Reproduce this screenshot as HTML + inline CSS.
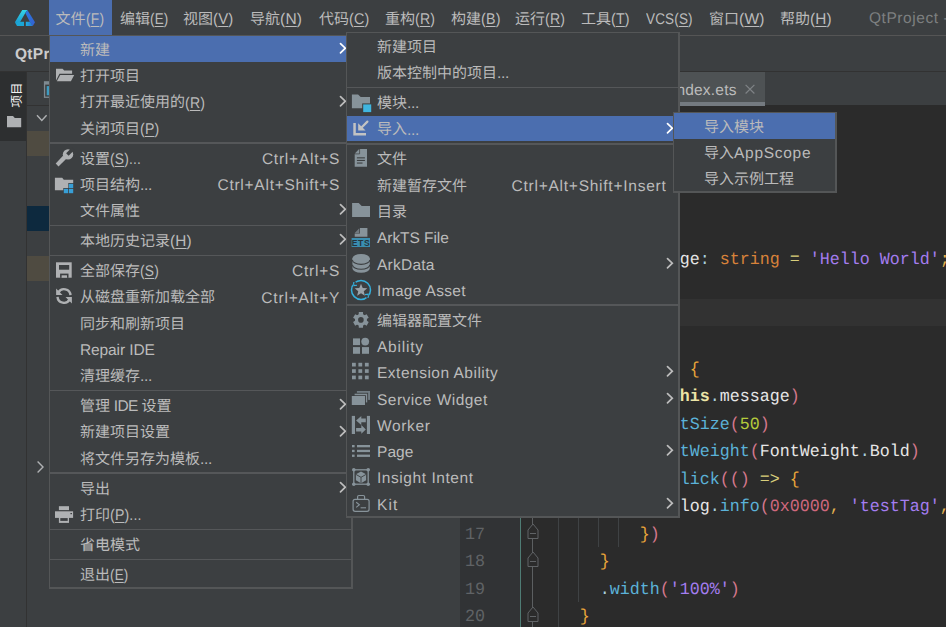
<!DOCTYPE html>
<html lang="zh-CN"><head><meta charset="utf-8"><title>DevEco Studio</title>
<style>
html,body{margin:0;padding:0;background:#3c3f41;width:946px;height:627px;overflow:hidden;}
#root{position:absolute;left:0;top:0;width:946px;height:627px;overflow:hidden;background:#3c3f41;}
body{width:946px;height:627px;position:relative;overflow:hidden;font-family:"Liberation Sans",sans-serif;font-size:15px;color:#bbbbbb;}
.t{text-rendering:geometricPrecision;position:absolute;white-space:nowrap;font-family:"Liberation Sans",sans-serif;font-size:15px;}
.z{display:inline-block;position:relative;top:1.6px;white-space:nowrap;letter-spacing:0;font-family:"Liberation Sans","Noto Sans CJK SC",sans-serif;font-size:15px;line-height:1;}
.l{font-size:15.5px;letter-spacing:0.3px;position:relative;top:1.8px;}
.c{text-rendering:geometricPrecision;position:absolute;white-space:pre;font-family:"Liberation Mono",monospace;font-size:16.67px;transform:scaleY(1.03);transform-origin:0 50%;}
u{text-decoration:underline;text-underline-offset:2px;text-decoration-thickness:1px;}
svg{display:block}
</style></head><body><div id="root">
<div style="position:absolute;left:0px;top:0px;width:946px;height:35px;background:#3c3f41;"></div>
<div style="position:absolute;left:0px;top:35px;width:946px;height:1px;background:#555555;"></div>
<div style="position:absolute;left:0px;top:36px;width:946px;height:35px;background:#3c3f41;"></div>
<div style="position:absolute;left:0px;top:71px;width:946px;height:1px;background:#323232;"></div>
<div style="position:absolute;left:0px;top:72px;width:26px;height:555px;background:#3c3f41;"></div>
<div style="position:absolute;left:0px;top:72px;width:26px;height:68.6px;background:#2d2f30;"></div>
<div style="position:absolute;left:26px;top:72px;width:1px;height:555px;background:#323232;"></div>
<div style="position:absolute;left:27px;top:72px;width:433px;height:555px;background:#3c3f41;"></div>
<div style="position:absolute;left:27px;top:105px;width:433px;height:1px;background:#323232;"></div>
<div style="position:absolute;left:27px;top:131px;width:433px;height:25px;background:#4f4b41;"></div>
<div style="position:absolute;left:27px;top:205.5px;width:433px;height:25px;background:#0d293e;"></div>
<div style="position:absolute;left:27px;top:256px;width:433px;height:25px;background:#4f4b41;"></div>
<div style="position:absolute;left:460px;top:72px;width:486px;height:33px;background:#3c3f41;"></div>
<div style="position:absolute;left:460px;top:105px;width:486px;height:522px;background:#2b2b2b;"></div>
<div style="position:absolute;left:640px;top:72px;width:125px;height:34px;background:#4e5254;"></div>
<div style="position:absolute;left:640px;top:101.8px;width:125px;height:4.2px;background:#747a80;"></div>
<div style="position:absolute;left:460px;top:106px;width:60px;height:521px;background:#313335;"></div>
<div style="position:absolute;left:520px;top:106px;width:1px;height:521px;background:#4f7c74;"></div>
<div style="position:absolute;left:521px;top:299px;width:425px;height:26.5px;background:#323232;"></div>
<div style="position:absolute;left:49px;top:0px;width:63px;height:35px;background:#4b6eaf;"></div>
<div class="t" style="left:55.5px;top:0px;height:35px;line-height:35px;color:#bbbbbb;"><span class="z" style="width:30px">文件</span><span class="l" style="display:inline-block;transform:scaleX(0.89);transform-origin:0 50%;letter-spacing:0.2px">(<u>F</u>)</span></div>
<div class="t" style="left:120px;top:0px;height:35px;line-height:35px;color:#bbbbbb;"><span class="z" style="width:30px">编辑</span><span class="l" style="display:inline-block;transform:scaleX(0.865);transform-origin:0 50%;letter-spacing:0.2px">(<u>E</u>)</span></div>
<div class="t" style="left:183px;top:0px;height:35px;line-height:35px;color:#bbbbbb;"><span class="z" style="width:30px">视图</span><span class="l" style="display:inline-block;transform:scaleX(0.96);transform-origin:0 50%;letter-spacing:0.2px">(<u>V</u>)</span></div>
<div class="t" style="left:250px;top:0px;height:35px;line-height:35px;color:#bbbbbb;"><span class="z" style="width:30px">导航</span><span class="l" style="display:inline-block;transform:scaleX(1.0);transform-origin:0 50%;letter-spacing:0.2px">(<u>N</u>)</span></div>
<div class="t" style="left:319px;top:0px;height:35px;line-height:35px;color:#bbbbbb;"><span class="z" style="width:30px">代码</span><span class="l" style="display:inline-block;transform:scaleX(0.92);transform-origin:0 50%;letter-spacing:0.2px">(<u>C</u>)</span></div>
<div class="t" style="left:385px;top:0px;height:35px;line-height:35px;color:#bbbbbb;"><span class="z" style="width:30px">重构</span><span class="l" style="display:inline-block;transform:scaleX(0.907);transform-origin:0 50%;letter-spacing:0.2px">(<u>R</u>)</span></div>
<div class="t" style="left:451px;top:0px;height:35px;line-height:35px;color:#bbbbbb;"><span class="z" style="width:30px">构建</span><span class="l" style="display:inline-block;transform:scaleX(0.92);transform-origin:0 50%;letter-spacing:0.2px">(<u>B</u>)</span></div>
<div class="t" style="left:515px;top:0px;height:35px;line-height:35px;color:#bbbbbb;"><span class="z" style="width:30px">运行</span><span class="l" style="display:inline-block;transform:scaleX(0.907);transform-origin:0 50%;letter-spacing:0.2px">(<u>R</u>)</span></div>
<div class="t" style="left:581px;top:0px;height:35px;line-height:35px;color:#bbbbbb;"><span class="z" style="width:30px">工具</span><span class="l" style="display:inline-block;transform:scaleX(0.92);transform-origin:0 50%;letter-spacing:0.2px">(<u>T</u>)</span></div>
<div class="t" style="left:645.5px;top:0px;height:35px;line-height:35px;color:#bbbbbb;"><span class="l" style="display:inline-block;transform:scaleX(0.87);transform-origin:0 50%;letter-spacing:0.2px">VCS(<u>S</u>)</span></div>
<div class="t" style="left:709px;top:0px;height:35px;line-height:35px;color:#bbbbbb;"><span class="z" style="width:30px">窗口</span><span class="l" style="display:inline-block;transform:scaleX(1.0);transform-origin:0 50%;letter-spacing:0.2px">(<u>W</u>)</span></div>
<div class="t" style="left:780px;top:0px;height:35px;line-height:35px;color:#bbbbbb;"><span class="z" style="width:30px">帮助</span><span class="l" style="display:inline-block;transform:scaleX(0.99);transform-origin:0 50%;letter-spacing:0.2px">(<u>H</u>)</span></div>
<div class="t" style="left:869px;top:-1.2px;height:35px;line-height:35px;color:#7d7f80;"><span class="l" style="letter-spacing:0.55px">QtProject -</span></div>
<div class="t" style="left:15px;top:34.8px;height:35px;line-height:35px;color:#cccccc;font-weight:bold;"><span class="l">QtProject</span></div>
<div class="t" style="left:3.1px;top:87.3px;width:26px;height:16px;line-height:16px;font-size:12.5px;color:#f2f2f2;text-align:center;transform:rotate(-90deg);transform-origin:50% 50%;"><span class="z" style="width:25px;font-size:12.5px;top:1.1px">项目</span></div>
<div class="t" style="left:676.4px;top:72.4px;height:34px;line-height:34px;color:#bbbbbb;"><span class="l" style="letter-spacing:0.2px">ndex.ets</span></div>
<div class="c" style="left:679.8px;top:246.55px;height:27.5px;line-height:27.5px;"><span style="color:#e6e6e6;">ge</span><span style="color:#a8cfdc;">:</span> <span style="color:#d8823a;">string</span> <span style="color:#d9cf7c;">=</span> <span style="color:#a47df0;">'Hello World'</span><span style="color:#e0b050;">;</span></div>
<div class="c" style="left:689.8px;top:356.55px;height:27.5px;line-height:27.5px;"><span style="color:#e8a53a;">{</span></div>
<div class="c" style="left:679.8px;top:384.05px;height:27.5px;line-height:27.5px;"><span style="color:#ece4a6;font-weight:bold;">his</span><span style="color:#a8cfdc;">.</span><span style="color:#e6e6e6;">message</span><span style="color:#d4788e;">)</span></div>
<div class="c" style="left:679.8px;top:411.55px;height:27.5px;line-height:27.5px;"><span style="color:#5bb2d8;">tSize</span><span style="color:#d4788e;">(</span><span style="color:#b5cc3c;">50</span><span style="color:#d4788e;">)</span></div>
<div class="c" style="left:679.8px;top:439.05px;height:27.5px;line-height:27.5px;"><span style="color:#5bb2d8;">tWeight</span><span style="color:#d4788e;">(</span><span style="color:#e6e6e6;">FontWeight</span><span style="color:#a8cfdc;">.</span><span style="color:#e6e6e6;">Bold</span><span style="color:#d4788e;">)</span></div>
<div class="c" style="left:679.8px;top:466.55px;height:27.5px;line-height:27.5px;"><span style="color:#5bb2d8;">lick</span><span style="color:#d4788e;">(</span><span style="color:#d4788e;">()</span> <span style="color:#d9cf7c;">=&gt;</span> <span style="color:#e8a53a;">{</span></div>
<div class="c" style="left:679.8px;top:494.05px;height:27.5px;line-height:27.5px;"><span style="color:#e6e6e6;">log</span><span style="color:#a8cfdc;">.</span><span style="color:#5bb2d8;">info</span><span style="color:#d4788e;">(</span><span style="color:#d0687e;">0x0000</span><span style="color:#e0b050;">,</span> <span style="color:#a47df0;">'testTag'</span><span style="color:#e0b050;">,</span> <span style="color:#a47df0;">'Succeeded'</span></div>
<div class="c" style="left:639.8px;top:521.55px;height:27.5px;line-height:27.5px;"><span style="color:#e8a53a;">}</span><span style="color:#d4788e;">)</span></div>
<div class="c" style="left:599.8px;top:549.05px;height:27.5px;line-height:27.5px;"><span style="color:#e8a53a;">}</span></div>
<div class="c" style="left:599.8px;top:576.55px;height:27.5px;line-height:27.5px;"><span style="color:#a8cfdc;">.</span><span style="color:#5bb2d8;">width</span><span style="color:#d4788e;">(</span><span style="color:#a47df0;">'100%'</span><span style="color:#d4788e;">)</span></div>
<div class="c" style="left:579.8px;top:604.05px;height:27.5px;line-height:27.5px;"><span style="color:#e8a53a;">}</span></div>
<div class="c" style="left:455px;width:30px;text-align:right;top:521.55px;height:27.5px;line-height:27.5px;color:#606366;">17</div>
<div class="c" style="left:455px;width:30px;text-align:right;top:549.05px;height:27.5px;line-height:27.5px;color:#606366;">18</div>
<div class="c" style="left:455px;width:30px;text-align:right;top:576.55px;height:27.5px;line-height:27.5px;color:#606366;">19</div>
<div class="c" style="left:455px;width:30px;text-align:right;top:604.05px;height:27.5px;line-height:27.5px;color:#606366;">20</div>
<div style="position:absolute;left:558px;top:518px;width:1px;height:109px;background:#3f4244;"></div>
<div style="position:absolute;left:578px;top:518px;width:1px;height:83.75px;background:#3f4244;"></div>
<div style="position:absolute;left:598px;top:518px;width:1px;height:28.75px;background:#3f4244;"></div>
<div style="position:absolute;left:618px;top:518px;width:1px;height:28.75px;background:#3f4244;"></div>
<div style="position:absolute;left:532px;top:518px;width:1px;height:109px;background:#5c5f61;"></div>
<svg style="position:absolute;left:524.5px;top:522.25px" width="16" height="20" viewBox="524.5 522.25 16 20"><path d="M527.5,530.25 L532.5,524.25 L537.5,530.25 V538.75 H527.5 Z" fill="#2b2b2b" stroke="#606366" stroke-width="1"/><path d="M529.5,533.75 H535.5" stroke="#606366" stroke-width="1"/></svg>
<svg style="position:absolute;left:524.5px;top:549.75px" width="16" height="20" viewBox="524.5 549.75 16 20"><path d="M527.5,557.75 L532.5,551.75 L537.5,557.75 V566.25 H527.5 Z" fill="#2b2b2b" stroke="#606366" stroke-width="1"/><path d="M529.5,561.25 H535.5" stroke="#606366" stroke-width="1"/></svg>
<svg style="position:absolute;left:524.5px;top:604.75px" width="16" height="20" viewBox="524.5 604.75 16 20"><path d="M527.5,612.75 L532.5,606.75 L537.5,612.75 V621.25 H527.5 Z" fill="#2b2b2b" stroke="#606366" stroke-width="1"/><path d="M529.5,616.25 H535.5" stroke="#606366" stroke-width="1"/></svg>
<svg style="position:absolute;left:12px;top:8px" width="26" height="20" viewBox="12 8 26 20">
<defs>
<linearGradient id="lg1" x1="0" y1="0" x2="0" y2="1"><stop offset="0" stop-color="#35d6e6"/><stop offset="1" stop-color="#1b9fd3"/></linearGradient>
<linearGradient id="lg2" x1="0" y1="0" x2="1" y2="1"><stop offset="0" stop-color="#2a78df"/><stop offset="1" stop-color="#3460d0"/></linearGradient>
<linearGradient id="lg3" x1="0" y1="0" x2="1" y2="0"><stop offset="0" stop-color="#1fb0dc"/><stop offset="1" stop-color="#2b73d8"/></linearGradient>
</defs>
<polygon points="22.2,10 27.4,10 25.3,12.9 20.1,21.9 14.9,22.2" fill="url(#lg1)"/>
<polygon points="27.4,10 35,22.3 32.8,26 29.9,21.9 25.3,12.9" fill="url(#lg2)"/>
<polygon points="14.9,22.2 20.1,21.8 24,21.8 24,26 17,26" fill="#1ba6d6"/>
<polygon points="25.8,21.8 29.9,21.8 32.8,26 25.8,26" fill="url(#lg3)"/>
</svg>
<svg style="position:absolute;left:6px;top:114px" width="18" height="16" viewBox="6 114 18 16"><path d="M7,116 h6 l1.8,2 h6.4 v9.3 h-14.2 z" fill="#afb1b3"/></svg>
<svg style="position:absolute;left:42px;top:79px" width="14" height="22" viewBox="42 79 14 22">
<rect x="43.9" y="81.2" width="12" height="16.7" fill="#7f8a91"/>
<rect x="45.2" y="84.6" width="10" height="12" fill="#3c3f41"/>
<rect x="46.7" y="86.1" width="8" height="9.2" fill="#3e9bc0"/></svg>
<svg style="position:absolute;left:34px;top:110px" width="16" height="14" viewBox="34 110 16 14"><polyline points="37,115.2 41.8,120.4 46.6,115.2" fill="none" stroke="#afb1b3" stroke-width="1.4"/></svg>
<svg style="position:absolute;left:34px;top:458px" width="14" height="18" viewBox="34 458 14 18"><polyline points="37.6,461.6 43,467 37.6,472.4" fill="none" stroke="#afb1b3" stroke-width="1.4"/></svg>
<svg style="position:absolute;left:742px;top:80px" width="18" height="18" viewBox="742 80 18 18"><path d="M745.6,84.9 L754.4,93.5 M754.4,84.9 L745.6,93.5" stroke="#7f8386" stroke-width="1.2" fill="none"/></svg>
<div style="position:absolute;left:49px;top:35px;width:304px;height:554px;background:#545657;"></div>
<div style="position:absolute;left:50px;top:36px;width:301px;height:551px;background:#3c3f41;"></div>
<div style="position:absolute;left:50px;top:36px;width:301px;height:26px;background:#4b6eaf;"></div>
<div class="t" style="left:80px;top:36.25px;height:26.25px;line-height:26.25px;color:#bbbbbb;"><span class="z" style="width:30px">新建</span></div>
<svg style="position:absolute;left:338px;top:41.15px" width="10" height="15" viewBox="338 41.15 10 15"><polyline points="340.5,43.75 345.3,48.35 340.5,52.95" fill="none" stroke="#ffffff" stroke-width="1.7" stroke-linecap="round" stroke-linejoin="miter"/></svg>
<div class="t" style="left:80px;top:62.5px;height:26.25px;line-height:26.25px;color:#bbbbbb;"><span class="z" style="width:60px">打开项目</span></div>
<div class="t" style="left:80px;top:88.75px;height:26.25px;line-height:26.25px;color:#bbbbbb;"><span class="z" style="width:105px">打开最近使用的</span><span class="l" style="display:inline-block;transform:scaleX(0.907);transform-origin:0 50%;letter-spacing:0.2px">(<u>R</u>)</span></div>
<svg style="position:absolute;left:338px;top:93.65px" width="10" height="15" viewBox="338 93.65 10 15"><polyline points="340.5,96.25 345.3,100.85000000000001 340.5,105.45" fill="none" stroke="#bdbdbd" stroke-width="1.7" stroke-linecap="round" stroke-linejoin="miter"/></svg>
<div class="t" style="left:80px;top:115.0px;height:26.25px;line-height:26.25px;color:#bbbbbb;"><span class="z" style="width:60px">关闭项目</span><span class="l" style="display:inline-block;transform:scaleX(0.91);transform-origin:0 50%;letter-spacing:0.2px">(<u>P</u>)</span></div>
<div style="position:absolute;left:50px;top:142.375px;width:301px;height:1.5px;background:#555759;"></div>
<div class="t" style="left:80px;top:145.0px;height:26.25px;line-height:26.25px;color:#bbbbbb;"><span class="z" style="width:30px">设置</span><span class="l" style="display:inline-block;transform:scaleX(0.89);transform-origin:0 50%;letter-spacing:0.2px">(<u>S</u>)...</span></div>
<div class="t" style="right:605.8px;top:145.0px;height:26.25px;line-height:26.25px;color:#bbbbbb;"><span class="l" style="letter-spacing:0.767px">Ctrl+Alt+S</span></div>
<div class="t" style="left:80px;top:171.25px;height:26.25px;line-height:26.25px;color:#bbbbbb;"><span class="z" style="width:60px">项目结构</span><span class="l" style="letter-spacing:-0.3px">...</span></div>
<div class="t" style="right:605.8px;top:171.25px;height:26.25px;line-height:26.25px;color:#bbbbbb;"><span class="l" style="letter-spacing:0.753px">Ctrl+Alt+Shift+S</span></div>
<div class="t" style="left:80px;top:197.5px;height:26.25px;line-height:26.25px;color:#bbbbbb;"><span class="z" style="width:60px">文件属性</span></div>
<svg style="position:absolute;left:338px;top:202.4px" width="10" height="15" viewBox="338 202.4 10 15"><polyline points="340.5,205.0 345.3,209.6 340.5,214.20000000000002" fill="none" stroke="#bdbdbd" stroke-width="1.7" stroke-linecap="round" stroke-linejoin="miter"/></svg>
<div style="position:absolute;left:50px;top:224.875px;width:301px;height:1.5px;background:#555759;"></div>
<div class="t" style="left:80px;top:227.5px;height:26.25px;line-height:26.25px;color:#bbbbbb;"><span class="z" style="width:90px">本地历史记录</span><span class="l" style="display:inline-block;transform:scaleX(0.99);transform-origin:0 50%;letter-spacing:0.2px">(<u>H</u>)</span></div>
<svg style="position:absolute;left:338px;top:232.4px" width="10" height="15" viewBox="338 232.4 10 15"><polyline points="340.5,235.0 345.3,239.6 340.5,244.20000000000002" fill="none" stroke="#bdbdbd" stroke-width="1.7" stroke-linecap="round" stroke-linejoin="miter"/></svg>
<div style="position:absolute;left:50px;top:254.875px;width:301px;height:1.5px;background:#555759;"></div>
<div class="t" style="left:80px;top:257.5px;height:26.25px;line-height:26.25px;color:#bbbbbb;"><span class="z" style="width:60px">全部保存</span><span class="l" style="display:inline-block;transform:scaleX(0.89);transform-origin:0 50%;letter-spacing:0.2px">(<u>S</u>)</span></div>
<div class="t" style="right:605.8px;top:257.5px;height:26.25px;line-height:26.25px;color:#bbbbbb;"><span class="l" style="letter-spacing:0.8px">Ctrl+S</span></div>
<div class="t" style="left:80px;top:283.75px;height:26.25px;line-height:26.25px;color:#bbbbbb;"><span class="z" style="width:135px">从磁盘重新加载全部</span></div>
<div class="t" style="right:605.8px;top:283.75px;height:26.25px;line-height:26.25px;color:#bbbbbb;"><span class="l" style="letter-spacing:0.833px">Ctrl+Alt+Y</span></div>
<div class="t" style="left:80px;top:310.0px;height:26.25px;line-height:26.25px;color:#bbbbbb;"><span class="z" style="width:105px">同步和刷新项目</span></div>
<div class="t" style="left:80px;top:336.25px;height:26.25px;line-height:26.25px;color:#bbbbbb;"><span class="l" style="letter-spacing:-0.111px">Repair IDE</span></div>
<div class="t" style="left:80px;top:362.5px;height:26.25px;line-height:26.25px;color:#bbbbbb;"><span class="z" style="width:60px">清理缓存</span><span class="l" style="letter-spacing:-0.3px">...</span></div>
<div style="position:absolute;left:50px;top:389.875px;width:301px;height:1.5px;background:#555759;"></div>
<div class="t" style="left:80px;top:392.5px;height:26.25px;line-height:26.25px;color:#bbbbbb;"><span class="z" style="width:30px">管理</span><span class="l" style="letter-spacing:-0.6px"> IDE </span><span class="z" style="width:30px">设置</span></div>
<svg style="position:absolute;left:338px;top:397.4px" width="10" height="15" viewBox="338 397.4 10 15"><polyline points="340.5,400.0 345.3,404.59999999999997 340.5,409.2" fill="none" stroke="#bdbdbd" stroke-width="1.7" stroke-linecap="round" stroke-linejoin="miter"/></svg>
<div class="t" style="left:80px;top:418.75px;height:26.25px;line-height:26.25px;color:#bbbbbb;"><span class="z" style="width:90px">新建项目设置</span></div>
<svg style="position:absolute;left:338px;top:423.65px" width="10" height="15" viewBox="338 423.65 10 15"><polyline points="340.5,426.25 345.3,430.84999999999997 340.5,435.45" fill="none" stroke="#bdbdbd" stroke-width="1.7" stroke-linecap="round" stroke-linejoin="miter"/></svg>
<div class="t" style="left:80px;top:445.0px;height:26.25px;line-height:26.25px;color:#bbbbbb;"><span class="z" style="width:120px">将文件另存为模板</span><span class="l" style="letter-spacing:-0.3px">...</span></div>
<div style="position:absolute;left:50px;top:472.375px;width:301px;height:1.5px;background:#555759;"></div>
<div class="t" style="left:80px;top:475.0px;height:26.25px;line-height:26.25px;color:#bbbbbb;"><span class="z" style="width:30px">导出</span></div>
<svg style="position:absolute;left:338px;top:479.9px" width="10" height="15" viewBox="338 479.9 10 15"><polyline points="340.5,482.5 345.3,487.09999999999997 340.5,491.7" fill="none" stroke="#bdbdbd" stroke-width="1.7" stroke-linecap="round" stroke-linejoin="miter"/></svg>
<div class="t" style="left:80px;top:501.25px;height:26.25px;line-height:26.25px;color:#bbbbbb;"><span class="z" style="width:30px">打印</span><span class="l" style="display:inline-block;transform:scaleX(0.91);transform-origin:0 50%;letter-spacing:0.2px">(<u>P</u>)...</span></div>
<div style="position:absolute;left:50px;top:528.625px;width:301px;height:1.5px;background:#555759;"></div>
<div class="t" style="left:80px;top:531.25px;height:26.25px;line-height:26.25px;color:#bbbbbb;"><span class="z" style="width:60px">省电模式</span></div>
<div style="position:absolute;left:50px;top:558.625px;width:301px;height:1.5px;background:#555759;"></div>
<div class="t" style="left:80px;top:561.25px;height:26.25px;line-height:26.25px;color:#bbbbbb;"><span class="z" style="width:30px">退出</span><span class="l" style="display:inline-block;transform:scaleX(0.865);transform-origin:0 50%;letter-spacing:0.2px">(<u>E</u>)</span></div>
<div style="position:absolute;left:346px;top:32px;width:334px;height:486px;background:#545657;"></div>
<div style="position:absolute;left:347px;top:33px;width:331px;height:483px;background:#3c3f41;"></div>
<div class="t" style="left:377px;top:33.25px;height:26.25px;line-height:26.25px;color:#bbbbbb;"><span class="z" style="width:60px">新建项目</span></div>
<div class="t" style="left:377px;top:59.5px;height:26.25px;line-height:26.25px;color:#bbbbbb;"><span class="z" style="width:120px">版本控制中的项目</span><span class="l" style="letter-spacing:-0.3px">...</span></div>
<div style="position:absolute;left:347px;top:86.875px;width:331px;height:1.5px;background:#555759;"></div>
<div class="t" style="left:377px;top:89.5px;height:26.25px;line-height:26.25px;color:#bbbbbb;"><span class="z" style="width:30px">模块</span><span class="l" style="letter-spacing:-0.3px">...</span></div>
<div style="position:absolute;left:347px;top:116px;width:331px;height:25px;background:#4b6eaf;"></div>
<div class="t" style="left:377px;top:115.75px;height:26.25px;line-height:26.25px;color:#bbbbbb;"><span class="z" style="width:30px">导入</span><span class="l" style="letter-spacing:-0.3px">...</span></div>
<svg style="position:absolute;left:665px;top:120.65px" width="10" height="15" viewBox="665 120.65 10 15"><polyline points="667.5,123.25 672.3,127.85000000000001 667.5,132.45000000000002" fill="none" stroke="#ffffff" stroke-width="1.7" stroke-linecap="round" stroke-linejoin="miter"/></svg>
<div style="position:absolute;left:347px;top:143.125px;width:331px;height:1.5px;background:#555759;"></div>
<div class="t" style="left:377px;top:145.75px;height:26.25px;line-height:26.25px;color:#bbbbbb;"><span class="z" style="width:30px">文件</span></div>
<div class="t" style="left:377px;top:172.0px;height:26.25px;line-height:26.25px;color:#bbbbbb;"><span class="z" style="width:90px">新建暂存文件</span></div>
<div class="t" style="right:279.5px;top:172.0px;height:26.25px;line-height:26.25px;color:#bbbbbb;"><span class="l" style="letter-spacing:0.75px">Ctrl+Alt+Shift+Insert</span></div>
<div class="t" style="left:377px;top:198.25px;height:26.25px;line-height:26.25px;color:#bbbbbb;"><span class="z" style="width:30px">目录</span></div>
<div class="t" style="left:377px;top:224.5px;height:26.25px;line-height:26.25px;color:#bbbbbb;"><span class="l" style="letter-spacing:-0.056px">ArkTS File</span></div>
<div class="t" style="left:377px;top:250.75px;height:26.25px;line-height:26.25px;color:#bbbbbb;"><span class="l" style="letter-spacing:0.25px">ArkData</span></div>
<svg style="position:absolute;left:665px;top:255.64999999999998px" width="10" height="15" viewBox="665 255.64999999999998 10 15"><polyline points="667.5,258.25 672.3,262.84999999999997 667.5,267.45" fill="none" stroke="#bdbdbd" stroke-width="1.7" stroke-linecap="round" stroke-linejoin="miter"/></svg>
<div class="t" style="left:377px;top:277.0px;height:26.25px;line-height:26.25px;color:#bbbbbb;"><span class="l" style="letter-spacing:0.33px">Image Asset</span></div>
<div style="position:absolute;left:347px;top:304.375px;width:331px;height:1.5px;background:#555759;"></div>
<div class="t" style="left:377px;top:307.0px;height:26.25px;line-height:26.25px;color:#bbbbbb;"><span class="z" style="width:105px">编辑器配置文件</span></div>
<div class="t" style="left:377px;top:333.25px;height:26.25px;line-height:26.25px;color:#bbbbbb;"><span class="l" style="letter-spacing:0.783px">Ability</span></div>
<div class="t" style="left:377px;top:359.5px;height:26.25px;line-height:26.25px;color:#bbbbbb;"><span class="l" style="letter-spacing:0.5px">Extension Ability</span></div>
<svg style="position:absolute;left:665px;top:364.4px" width="10" height="15" viewBox="665 364.4 10 15"><polyline points="667.5,367.0 672.3,371.59999999999997 667.5,376.2" fill="none" stroke="#bdbdbd" stroke-width="1.7" stroke-linecap="round" stroke-linejoin="miter"/></svg>
<div class="t" style="left:377px;top:385.75px;height:26.25px;line-height:26.25px;color:#bbbbbb;"><span class="l" style="letter-spacing:0.462px">Service Widget</span></div>
<svg style="position:absolute;left:665px;top:390.65px" width="10" height="15" viewBox="665 390.65 10 15"><polyline points="667.5,393.25 672.3,397.84999999999997 667.5,402.45" fill="none" stroke="#bdbdbd" stroke-width="1.7" stroke-linecap="round" stroke-linejoin="miter"/></svg>
<div class="t" style="left:377px;top:412.0px;height:26.25px;line-height:26.25px;color:#bbbbbb;"><span class="l" style="letter-spacing:0.66px">Worker</span></div>
<div class="t" style="left:377px;top:438.25px;height:26.25px;line-height:26.25px;color:#bbbbbb;"><span class="l" style="letter-spacing:0.067px">Page</span></div>
<svg style="position:absolute;left:665px;top:443.15px" width="10" height="15" viewBox="665 443.15 10 15"><polyline points="667.5,445.75 672.3,450.34999999999997 667.5,454.95" fill="none" stroke="#bdbdbd" stroke-width="1.7" stroke-linecap="round" stroke-linejoin="miter"/></svg>
<div class="t" style="left:377px;top:464.5px;height:26.25px;line-height:26.25px;color:#bbbbbb;"><span class="l" style="letter-spacing:0.554px">Insight Intent</span></div>
<div class="t" style="left:377px;top:490.75px;height:26.25px;line-height:26.25px;color:#bbbbbb;"><span class="l" style="letter-spacing:1.05px">Kit</span></div>
<svg style="position:absolute;left:665px;top:495.65px" width="10" height="15" viewBox="665 495.65 10 15"><polyline points="667.5,498.25 672.3,502.84999999999997 667.5,507.45" fill="none" stroke="#bdbdbd" stroke-width="1.7" stroke-linecap="round" stroke-linejoin="miter"/></svg>
<div style="position:absolute;left:673px;top:112px;width:164px;height:81px;background:#545657;"></div>
<div style="position:absolute;left:674px;top:113px;width:161px;height:78px;background:#3c3f41;"></div>
<div style="position:absolute;left:674px;top:113px;width:161px;height:26px;background:#4b6eaf;"></div>
<div class="t" style="left:704px;top:113.25px;height:26.25px;line-height:26.25px;color:#bbbbbb;"><span class="z" style="width:60px">导入模块</span></div>
<div class="t" style="left:704px;top:139.5px;height:26.25px;line-height:26.25px;color:#bbbbbb;"><span class="z" style="width:30px">导入</span><span class="l" style="letter-spacing:0.72px">AppScope</span></div>
<div class="t" style="left:704px;top:165.75px;height:26.25px;line-height:26.25px;color:#bbbbbb;"><span class="z" style="width:90px">导入示例工程</span></div>
<svg style="position:absolute;left:54px;top:66px" width="22" height="18" viewBox="54 66 22 18">
<path d="M56,68.7 h6.6 l1.6,1.9 h7.9 v3.2 h-12.6 l-3.5,6.6 z" fill="#afb1b3"/>
<path d="M60.2,75 H74.2 L70.9,81.2 H56.8 Z" fill="#afb1b3"/></svg>
<svg style="position:absolute;left:54px;top:147px" width="22" height="22" viewBox="54 147 22 22">
<polygon points="55.7,163.5 58.5,166.4 66.6,158.4 63,155.7" fill="#afb1b3"/>
<circle cx="68" cy="154.4" r="5.2" fill="#afb1b3"/>
<polygon points="66.1,153.3 68.6,155.75 74.6,149.75 72.1,147.3" fill="#3c3f41"/></svg>
<svg style="position:absolute;left:54px;top:176px" width="22" height="19" viewBox="54 176 22 19">
<path d="M54.9,177.8 H62.2 L63.8,179.7 H73.2 V183 H68.3 V188 H63.3 V190.3 H54.9 Z" fill="#afb1b3"/>
<rect x="68.8" y="183.8" width="4.4" height="4.2" fill="#389fd6"/>
<rect x="63.8" y="188.8" width="4.2" height="4.4" fill="#389fd6"/>
<rect x="68.8" y="188.8" width="4.4" height="4.4" fill="#389fd6"/></svg>
<svg style="position:absolute;left:55px;top:261px" width="18" height="18" viewBox="55 261 18 18">
<rect x="56" y="262.3" width="15.7" height="15.4" fill="#afb1b3"/>
<rect x="59" y="265" width="10.2" height="4.7" fill="#3c3f41"/>
<rect x="60.1" y="273.6" width="8.4" height="4.2" fill="#3c3f41"/>
<rect x="61.6" y="275.3" width="5.4" height="2.5" fill="#afb1b3"/></svg>
<svg style="position:absolute;left:54px;top:286px" width="20" height="20" viewBox="54 286 20 20">
<path d="M70.5,295.1 A6.5,6.5 0 0 0 58.3,292.6" fill="none" stroke="#afb1b3" stroke-width="2.4"/>
<path d="M57.5,296.9 A6.5,6.5 0 0 0 69.7,299.4" fill="none" stroke="#afb1b3" stroke-width="2.4"/>
<polygon points="56.1,288.6 56.1,295.1 62.5,295.1" fill="#afb1b3"/>
<polygon points="71.9,303.4 71.9,296.9 65.5,296.9" fill="#afb1b3"/></svg>
<svg style="position:absolute;left:54px;top:505px" width="21" height="19" viewBox="54 505 21 19">
<rect x="58.9" y="506.2" width="10.1" height="3.9" fill="#afb1b3"/>
<rect x="55" y="511.3" width="18.1" height="6.6" fill="#afb1b3"/>
<rect x="58.9" y="517" width="10.1" height="5.9" fill="#afb1b3"/>
<rect x="60.3" y="518.1" width="7.4" height="2.8" fill="#3c3f41"/>
<rect x="70.4" y="513" width="1.6" height="1.2" fill="#3c3f41"/></svg>
<svg style="position:absolute;left:351px;top:93px" width="22" height="21" viewBox="351 93 22 21">
<path d="M351.9,94.5 h6.2 l2.6,2.6 h9.3 v11.2 h-18.1 z" fill="#87939a"/>
<rect x="362.2" y="103.4" width="10" height="10" fill="#3c3f41"/>
<rect x="363.2" y="104.4" width="8" height="7.7" fill="#40b6e0"/></svg>
<svg style="position:absolute;left:352px;top:119px" width="19" height="18" viewBox="352 119 19 18">
<path d="M354.55,123 V134.2 H366" fill="none" stroke="#c2c3c3" stroke-width="2.5"/>
<path d="M367.4,121.6 L361.8,127.2" stroke="#c2c3c3" stroke-width="2.2" stroke-linecap="round" fill="none"/>
<polygon points="358.2,130.5 358.2,123.2 365.5,130.5" fill="#c2c3c3"/></svg>
<svg style="position:absolute;left:353px;top:148px" width="16" height="20" viewBox="353 148 16 20">
<path d="M359.6,149 H367 V166.7 H354.7 V153.9 Z" fill="#87939a"/>
<path d="M354.7,153.4 L359.1,149 V153.4 Z" fill="#87939a" opacity="0.75"/>
<path d="M359.6,149 V153.9 H354.7" fill="none" stroke="#3c3f41" stroke-width="0.7"/>
<rect x="356.9" y="157.3" width="8" height="1.1" fill="#3c3f41"/>
<rect x="356.9" y="159.9" width="8" height="1.1" fill="#3c3f41"/>
<rect x="356.9" y="162.5" width="5.6" height="1.1" fill="#3c3f41"/></svg>
<svg style="position:absolute;left:351px;top:202px" width="21" height="17" viewBox="351 202 21 17"><path d="M352.1,203 h6.6 l3,3 h8.3 v11 h-17.9 z" fill="#87939a"/></svg>
<svg style="position:absolute;left:351px;top:227px" width="21" height="22" viewBox="351 227 21 22">
<path d="M360,228 H367.4 V236.7 H354.7 V233.6 H360 Z" fill="#87939a"/>
<path d="M354.7,233 L359.3,228.3 V233 Z" fill="#87939a" opacity="0.7"/>
<rect x="351.6" y="238" width="18.4" height="9" fill="#3a8eb0"/>
<text x="361.1" y="245.7" font-family="Liberation Sans, sans-serif" font-weight="bold" font-size="8.6" text-anchor="middle" fill="#26343c" letter-spacing="0.7">ETS</text></svg>
<svg style="position:absolute;left:351px;top:252px" width="21" height="23" viewBox="351 252 21 23">
<path d="M352.4,258.4 V268.3 A8.7,4.5 0 0 0 369.8,268.3 V258.4 Z" fill="#87939a"/>
<ellipse cx="361.1" cy="258.4" rx="8.7" ry="4.5" fill="#87939a"/>
<path d="M352.4,259.2 A8.7,4.5 0 0 0 369.8,259.2" fill="none" stroke="#3c3f41" stroke-width="1.1" transform="translate(0,0.7)"/>
<path d="M352.4,259.2 A8.7,4.5 0 0 0 369.8,259.2" fill="none" stroke="#3c3f41" stroke-width="1.1" transform="translate(0,5.6)"/></svg>
<svg style="position:absolute;left:350px;top:279px" width="23" height="23" viewBox="350 279 23 23">
<circle cx="361" cy="289.9" r="9.5" fill="none" stroke="#35b0dc" stroke-width="1.5"/>
<path d="M352.6,284.4 L356.4,283.2 M369.4,295.4 L365.6,296.6" stroke="#3c3f41" stroke-width="2.6"/>
<path d="M353.5,282.2 L353.9,285.6 L357,285.2" fill="none" stroke="#35b0dc" stroke-width="1.1"/>
<path d="M368.5,297.6 L368.1,294.2 L365,294.6" fill="none" stroke="#35b0dc" stroke-width="1.1"/>
<polygon points="361.00,283.80 362.70,288.05 367.28,288.36 363.76,291.30 364.88,295.74 361.00,293.30 357.12,295.74 358.24,291.30 354.72,288.36 359.30,288.05" fill="#9aa3a9"/></svg>
<svg style="position:absolute;left:351px;top:310px" width="20" height="20" viewBox="351 310 20 20"><polygon points="358.73,314.41 358.80,312.08 363.00,312.08 363.07,314.41 364.56,315.28 366.63,314.17 368.72,317.80 366.74,319.04 366.74,320.76 368.72,322.00 366.63,325.63 364.56,324.52 363.07,325.39 363.00,327.72 358.80,327.72 358.73,325.39 357.24,324.52 355.17,325.63 353.08,322.00 355.06,320.76 355.06,319.04 353.08,317.80 355.17,314.17 357.24,315.28" fill="#87939a"/><circle cx="360.9" cy="319.9" r="5.9" fill="#87939a"/><circle cx="360.9" cy="319.9" r="2.8" fill="#3c3f41"/></svg>
<svg style="position:absolute;left:352px;top:337px" width="18" height="18" viewBox="352 337 18 18">
<rect x="353" y="338.4" width="7" height="6.7" fill="#87939a"/>
<circle cx="365.2" cy="341.6" r="3.9" fill="#87939a"/>
<rect x="353" y="347.1" width="7" height="6.7" fill="#87939a"/>
<rect x="362" y="347.1" width="7" height="6.7" fill="#87939a"/></svg>
<svg style="position:absolute;left:351px;top:362px" width="19" height="19" viewBox="351 362 19 19"><rect x="352" y="362.8" width="3.8" height="3.7" fill="#87939a"/><rect x="352" y="369.2" width="3.8" height="3.7" fill="#87939a"/><rect x="352" y="375.6" width="3.8" height="3.7" fill="#87939a"/><rect x="358.4" y="362.8" width="3.8" height="3.7" fill="#87939a"/><rect x="358.4" y="369.2" width="3.8" height="3.7" fill="#87939a"/><rect x="358.4" y="375.6" width="3.8" height="3.7" fill="#87939a"/><rect x="364.9" y="362.8" width="3.8" height="3.7" fill="#87939a"/><rect x="364.9" y="369.2" width="3.8" height="3.7" fill="#87939a"/><rect x="364.9" y="375.6" width="3.8" height="3.7" fill="#87939a"/></svg>
<svg style="position:absolute;left:351px;top:390px" width="21" height="17" viewBox="351 390 21 17">
<rect x="356.9" y="391" width="13.1" height="8.9" fill="#717c83"/>
<rect x="353.7" y="392.8" width="14.4" height="10.5" fill="#3c3f41"/>
<rect x="354.6" y="393.7" width="12.6" height="8.7" fill="#838e95"/>
<rect x="351" y="395.2" width="14.9" height="10.6" fill="#3c3f41"/>
<rect x="351.8" y="396" width="13.2" height="9" fill="#87939a"/></svg>
<svg style="position:absolute;left:351px;top:415px" width="20" height="20" viewBox="351 415 20 20">
<rect x="351.8" y="415.9" width="3.2" height="18.1" fill="#87939a"/>
<rect x="366.9" y="415.9" width="3.1" height="18.1" fill="#87939a"/>
<polygon points="356.1,420.5 361.3,416.1 361.3,418.6 365.8,418.6 365.8,422.2 361.3,422.2 361.3,425" fill="#87939a"/>
<polygon points="365.8,429.5 361.3,425 361.3,428 356.1,428 356.1,431.5 361.3,431.5 361.3,433.8" fill="#87939a"/></svg>
<svg style="position:absolute;left:351px;top:444px" width="20" height="14" viewBox="351 444 20 14"><rect x="352" y="445.0" width="2.6" height="2.3" fill="#87939a"/><rect x="357" y="445.0" width="13" height="2.3" fill="#87939a"/><rect x="352" y="449.8" width="2.6" height="2.3" fill="#87939a"/><rect x="357" y="449.8" width="13" height="2.3" fill="#87939a"/><rect x="352" y="454.6" width="2.6" height="2.3" fill="#87939a"/><rect x="357" y="454.6" width="13" height="2.3" fill="#87939a"/></svg>
<svg style="position:absolute;left:351px;top:467px" width="21" height="21" viewBox="351 467 21 21">
<rect x="353.8" y="469.8" width="14.4" height="14.4" fill="none" stroke="#87939a" stroke-width="1.3"/>
<circle cx="353.8" cy="469.8" r="1.8" fill="#87939a"/><circle cx="368.2" cy="469.8" r="1.8" fill="#87939a"/>
<circle cx="353.8" cy="484.2" r="1.8" fill="#87939a"/><circle cx="368.2" cy="484.2" r="1.8" fill="#87939a"/>
<polygon points="361.00,471.40 366.11,474.35 366.11,480.25 361.00,483.20 355.89,480.25 355.89,474.35" fill="#87939a"/>
<path d="M361,477.3 V483.2 M361,477.3 L355.9,474.4 M361,477.3 L366.1,474.4" stroke="#3c3f41" stroke-width="0.9" fill="none"/></svg>
<svg style="position:absolute;left:351px;top:494px" width="21" height="20" viewBox="351 494 21 20">
<rect x="353.1" y="499.3" width="16" height="12" rx="2" ry="2" fill="none" stroke="#87939a" stroke-width="1.2"/>
<path d="M357.6,499.3 V496.8 Q357.6,495.5 358.9,495.5 H363.3 Q364.6,495.5 364.6,496.8 V499.3" fill="none" stroke="#87939a" stroke-width="1.2"/>
<path d="M356.2,502.2 L359.4,504.8 L356.2,507.4" fill="none" stroke="#87939a" stroke-width="1.1"/>
<path d="M360.6,507.8 H366" fill="none" stroke="#87939a" stroke-width="1.1"/></svg>
</div></body></html>
